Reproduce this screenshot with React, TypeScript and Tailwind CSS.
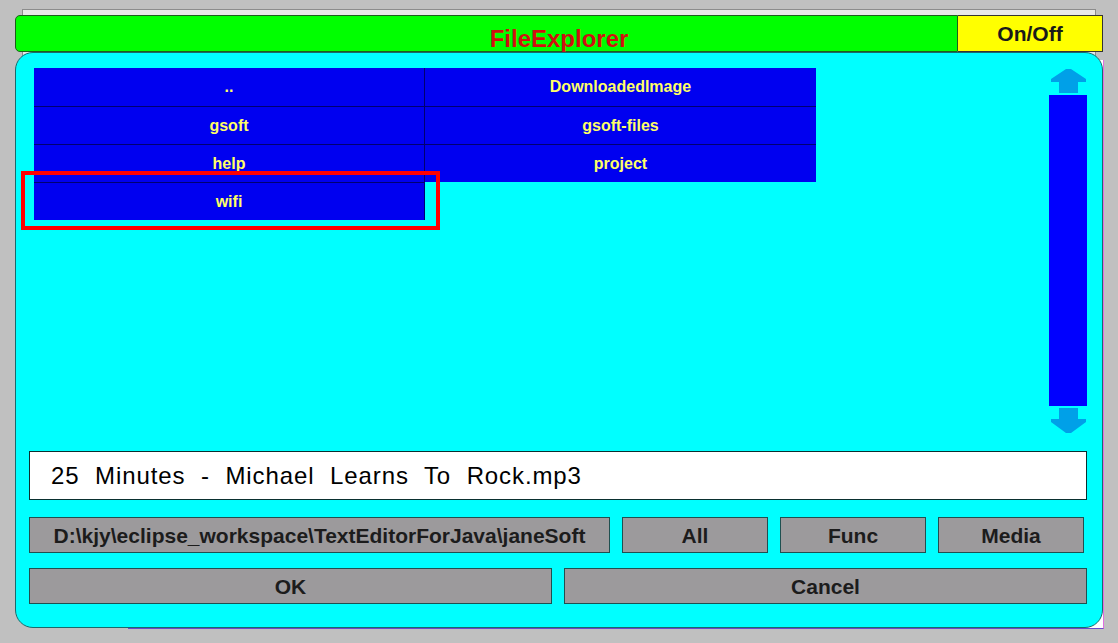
import React from 'react';

const entries = ['..', 'DownloadedImage', 'gsoft', 'gsoft-files', 'help', 'project', 'wifi'];

const ArrowUp = () => (
    <svg width="35" height="24" viewBox="0 0 35 24">
        <polygon points="15,0 20,0 35,10 35,13 27,13 27,24 8,24 8,13 0,13 0,10" fill="#00a0e8" />
    </svg>
);

const ArrowDown = () => (
    <svg width="35" height="25" viewBox="0 0 35 25">
        <polygon points="8,0 27,0 27,11 35,11 35,14 20,25 15,25 0,14 0,11 8,11" fill="#00a0e8" />
    </svg>
);

const GrayButton = ({ label, className }: { label: string; className: string }) => (
    <button className={`flex items-center justify-center bg-[#9c9a9c] border border-[#1f5050] text-[21px] font-bold text-[#1c1c1c] leading-none ${className}`}>
        {label}
    </button>
);

export default function App() {
    return (
        <div className="relative w-[1118px] h-[643px] overflow-hidden bg-[#c0c0c0] pt-[15px] pl-[15px] font-['Liberation_Sans',Arial,sans-serif]">
            {/* windows behind the dialog */}
            <div className="absolute left-[22px] top-[9px] w-[1074px] h-[60px] bg-[#e8e8e8] border border-[#8c8c8c]" />
            <div className="absolute left-[128px] top-[60px] w-[976px] h-[569px] bg-white border-r border-b border-r-[#e070e0] border-b-[#6a4ac8]" />

            <div className="relative flex flex-col w-[1088px]">
                {/* Header */}
                <div className="flex h-[37px]">
                    <div className="flex-1 flex justify-center pl-[145px] pt-[11px] bg-[#00ff00] border border-[#1d5e1d] rounded-l-[5px]">
                        <span className="text-[24px] leading-[24px] font-bold text-[#d01010]">FileExplorer</span>
                    </div>
                    <div className="w-[145px] flex items-center justify-center bg-[#ffff00] border border-[#333333] border-l-0">
                        <span className="text-[21px] font-bold text-[#1a1a1a] leading-none">On/Off</span>
                    </div>
                </div>

                {/* Body */}
                <div className="flex flex-col h-[576px] bg-[#00ffff] border border-[#1a6a6a] rounded-[18px] pl-[13px] pr-[15px] pt-[15px]">
                    <div className="flex h-[383px]">
                        <div className="relative ml-[5px] w-[782px] self-start grid grid-cols-2 auto-rows-[38px]">
                            {entries.map((name, i) => (
                                <div
                                    key={name}
                                    className={`flex items-center justify-center bg-[#0000f0] text-[16px] font-bold text-[#ffff66] ${i % 2 === 0 ? 'border-r border-r-[#000070]' : ''} ${i > 1 ? 'border-t border-t-[#000070]' : ''}`}
                                >
                                    {name}
                                </div>
                            ))}
                            <div className="absolute left-[-13px] top-[103px] w-[419px] h-[59px] border-4 border-[#ff0000]" />
                        </div>

                        <div className="ml-auto w-[38px] flex flex-col items-center pt-[1px]">
                            <ArrowUp />
                            <div className="mt-[2px] w-[38px] h-[311px] bg-[#0000ff]" />
                            <div className="mt-[2px]">
                                <ArrowDown />
                            </div>
                        </div>
                    </div>

                    {/* Selected file */}
                    <div className="flex items-center h-[49px] pl-[21px] bg-white border border-[#0a3030] text-[24px] text-black tracking-[0.9px] [word-spacing:8px]">
                        25 Minutes - Michael Learns To Rock.mp3
                    </div>

                    {/* Path + filters */}
                    <div className="flex h-[36px] gap-[12px] mt-[17px]">
                        <GrayButton label="D:\kjy\eclipse_workspace\TextEditorForJava\janeSoft" className="w-[581px]" />
                        <GrayButton label="All" className="w-[146px]" />
                        <GrayButton label="Func" className="w-[146px]" />
                        <GrayButton label="Media" className="w-[146px]" />
                    </div>

                    {/* Actions */}
                    <div className="flex h-[36px] gap-[12px] mt-[15px]">
                        <GrayButton label="OK" className="flex-1" />
                        <GrayButton label="Cancel" className="flex-1" />
                    </div>
                </div>
            </div>
        </div>
    );
}
